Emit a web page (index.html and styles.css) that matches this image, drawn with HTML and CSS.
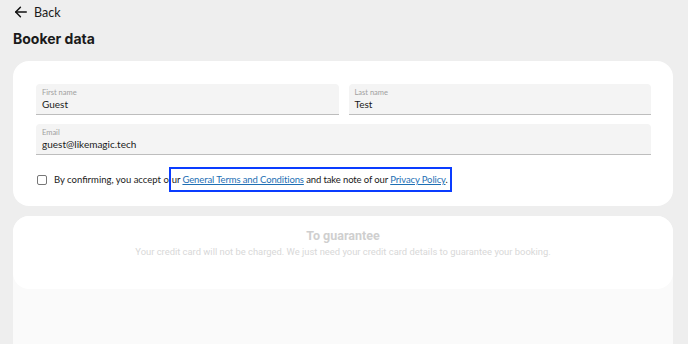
FILE: index.html
```html
<!DOCTYPE html>
<html lang="en">
  <head>
    <meta charset="UTF-8" />
    <meta name="viewport" content="width=device-width, initial-scale=1.0" />
    <title>Booker data</title>
    <link rel="stylesheet" href="styles.css">
  </head>
  <body>
    <div class="page">
      <a class="back" href="#">
        <svg width="14" height="14" viewBox="0 0 24 24" fill="none" stroke="#111" stroke-width="2.6" stroke-linecap="round" stroke-linejoin="round">
          <path d="M21 12H3" />
          <path d="M11 4l-8 8 8 8" />
        </svg>
        <span>Back</span>
      </a>

      <h1>Booker data</h1>

      <!-- Booker form -->
      <div class="card">
        <div class="row">
          <div class="field">
            <label>First name</label>
            <div class="value">Guest</div>
          </div>
          <div class="field">
            <label>Last name</label>
            <div class="value">Test</div>
          </div>
        </div>
        <div class="field">
          <label>Email</label>
          <div class="value">guest@likemagic.tech</div>
        </div>

        <div class="consent">
          <span class="checkbox"></span>
          <p>
            By confirming, you accept o<span class="mark">ur <a href="#">General Terms and Conditions</a> and take note of our <a href="#">Privacy Policy</a>.</span>
          </p>
        </div>
      </div>

      <!-- Guarantee (disabled) -->
      <div class="payment">
        <div class="guarantee">
          <h2>To guarantee</h2>
          <p>Your credit card will not be charged. We just need your credit card details to guarantee your booking.</p>
        </div>
      </div>
    </div>
  </body>
</html>
```

FILE: styles.css
```css
body {
  font-family: Lato, "Liberation Sans", sans-serif;
  margin: 0;
  background-color: #eeeeee;
  color: #1a1a1a;
}
.page {
  padding: 0 15px 0 13px;
}
.back {
  display: flex;
  align-items: center;
  gap: 6px;
  height: 24px;
  padding-left: 1px;
  color: #1a1a1a;
  text-decoration: none;
  font-size: 12.5px;
}
h1 {
  margin: 0;
  height: 37px;
  line-height: 30px;
  font-family: Inter, sans-serif;
  font-size: 14px;
  font-weight: 700;
}
.card {
  background-color: #fff;
  border-radius: 16px;
  padding: 23px 22px 21px 23px;
  display: flex;
  flex-direction: column;
  gap: 9px;
}
.row {
  display: flex;
  gap: 10px;
}
.row .field {
  flex: 1;
}
.field {
  background-color: #f4f4f4;
  border-radius: 4px 4px 0 0;
  border-bottom: 1px solid #bdbdbd;
  height: 30px;
  padding: 0 6px;
  box-sizing: content-box;
}
.field label {
  display: block;
  font-size: 7.5px;
  color: #a0a0a0;
  padding-top: 4px;
  line-height: 9px;
}
.field .value {
  font-size: 10px;
  line-height: 13px;
  padding-top: 1px;
}
.consent {
  display: flex;
  align-items: center;
  gap: 7px;
  padding: 10px 0 0 1px;
}
.checkbox {
  width: 8px;
  height: 8px;
  border: 1px solid #777;
  border-radius: 2px;
}
.consent p {
  margin: 0;
  font-size: 9.5px;
}
.mark {
  display: inline-block;
  border: 2px solid #0a3cff;
  padding: 5px 2px 5px 1px;
  margin: -7px 0;
  letter-spacing: -0.12px;
}
.consent a {
  color: #1e6fb4;
}
.payment {
  margin-top: 10px;
  background-color: #fafafa;
  border-radius: 16px 16px 0 0;
  height: 140px;
}
.guarantee {
  background-color: #fff;
  border-radius: 16px;
  height: 73px;
  text-align: center;
  padding-top: 12px;
  box-sizing: border-box;
}
.guarantee h2 {
  margin: 0;
  font-family: Roboto, sans-serif;
  font-size: 12.5px;
  color: #cfcfcf;
  font-weight: 700;
}
.guarantee p {
  margin: 3px 0 0;
  font-family: Roboto, sans-serif;
  font-size: 9.4px;
  color: #d8d8d8;
}
```
